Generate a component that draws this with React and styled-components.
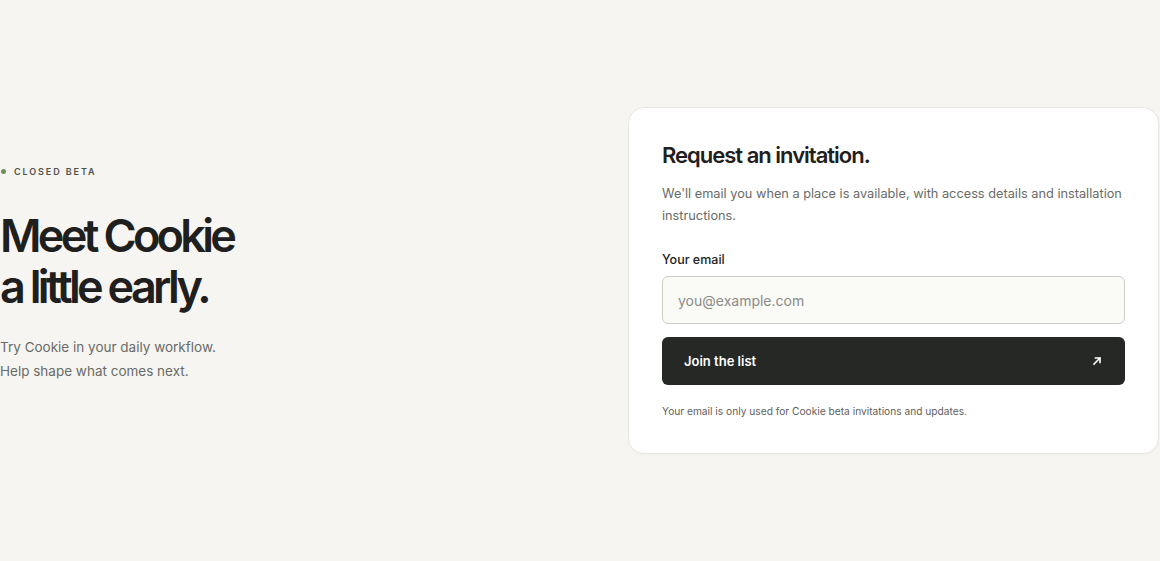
import React from "react";
import styled, { createGlobalStyle } from "styled-components";

const Global = createGlobalStyle`
  html, body { margin: 0; padding: 0; }
  body {
    background: #f6f5f2;
    font-family: Inter, "Noto Sans", sans-serif;
    color: #222321;
    -webkit-font-smoothing: antialiased;
  }
`;

const Page = styled.main`
  min-height: 561px;
  display: flex;
  align-items: center;
  justify-content: space-between;
  padding-right: 1px;
  box-sizing: border-box;
`;

const Intro = styled.section`
  flex: 1;
  display: flex;
  flex-direction: column;
  margin-top: -14px;
`;

const Eyebrow = styled.div`
  display: flex;
  align-items: center;
  gap: 8px;
  padding-left: 1px;
  font-size: 9px;
  line-height: 14px;
  font-weight: 600;
  letter-spacing: 1.9px;
  color: #4f514c;
  text-transform: uppercase;
`;

const Dot = styled.span`
  width: 5px;
  height: 5px;
  border-radius: 50%;
  background: #6d8f5b;
`;

const Headline = styled.h1`
  margin: 31px 0 0;
  font-size: 45px;
  line-height: 51px;
  font-weight: 560;
  letter-spacing: -3.7px;
  color: #1f201e;
`;

const Lead = styled.p`
  margin: 23px 0 0;
  font-size: 13.5px;
  line-height: 24px;
  color: #6a6b67;
`;

const Card = styled.section`
  width: 531px;
  box-sizing: border-box;
  background: #ffffff;
  border: 1px solid #e9e7e2;
  border-radius: 16px;
  padding: 33px 33px 35px 33px;
  box-shadow: 0 1px 2px rgba(30, 30, 20, 0.03);
`;

const Title = styled.h2`
  margin: 0;
  font-size: 22px;
  line-height: 28px;
  font-weight: 600;
  letter-spacing: -1px;
  color: #1f201e;
`;

const Description = styled.p`
  margin: 14px 0 0;
  font-size: 12.75px;
  line-height: 22px;
  color: #6a6b67;
`;

const Label = styled.label`
  display: block;
  margin-top: 25px;
  font-size: 12.5px;
  line-height: 16px;
  font-weight: 500;
  color: #222321;
`;

const Input = styled.input`
  display: block;
  width: 100%;
  box-sizing: border-box;
  margin-top: 8px;
  height: 48px;
  padding: 0 15px;
  border: 1px solid #cfcdc6;
  border-radius: 6px;
  background: #fafaf6;
  font-family: inherit;
  font-size: 14px;
  color: #222321;
  outline: none;
  &::placeholder { color: #8b8c87; }
`;

const Button = styled.button`
  display: flex;
  align-items: center;
  justify-content: space-between;
  width: 100%;
  height: 48px;
  margin-top: 13px;
  padding: 0 23px 0 22px;
  border: none;
  border-radius: 6px;
  background: #262826;
  color: #ffffff;
  font-family: inherit;
  font-size: 13px;
  font-weight: 600;
  cursor: pointer;
`;

const Note = styled.p`
  margin: 19px 0 0;
  font-size: 10.2px;
  line-height: 14px;
  color: #5f605c;
`;

const Arrow = () => (
  <svg width="10" height="10" viewBox="0 0 10 10" fill="none">
    <path d="M2 8L8 2M3.5 2H8V6.5" stroke="#fff" strokeWidth="1.6" strokeLinecap="square" />
  </svg>
);

export default function App() {
  return (
    <>
      <Global />
      <Page>
        <Intro>
          <Eyebrow>
            <Dot />
            Closed beta
          </Eyebrow>
          <Headline>
            Meet Cookie
            <br />
            a little early.
          </Headline>
          <Lead>
            Try Cookie in your daily workflow.
            <br />
            Help shape what comes next.
          </Lead>
        </Intro>
        <Card>
          <Title>Request an invitation.</Title>
          <Description>
            We'll email you when a place is available, with access details and installation instructions.
          </Description>
          <Label htmlFor="email">Your email</Label>
          <Input id="email" type="email" placeholder="you@example.com" />
          <Button type="button">
            Join the list
            <Arrow />
          </Button>
          <Note>Your email is only used for Cookie beta invitations and updates.</Note>
        </Card>
      </Page>
    </>
  );
}
